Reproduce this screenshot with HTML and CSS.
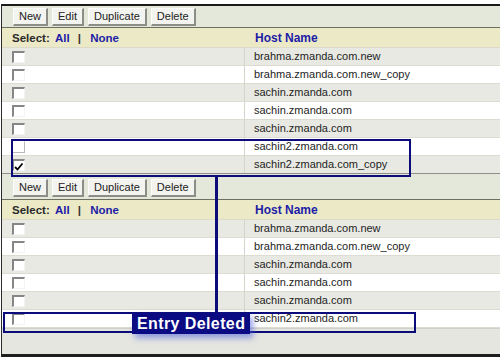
FILE: index.html
```html
<!DOCTYPE html>
<html>
<head>
<meta charset="utf-8">
<link rel="stylesheet" href="styles.css">
</head>
<body>
<div class="frame">
  <div class="toolbar toolbar-first">
    <span class="btn">New</span><span class="btn">Edit</span><span class="btn">Duplicate</span><span class="btn">Delete</span>
  </div>
  <div class="header">
    <div class="hcell"><b class="sel">Select:</b> <a class="lnk">All</a> <span class="bar">|</span> <a class="lnk">None</a></div>
    <div class="hcell host-h">Host Name</div>
  </div>
  <div class="row gray"><div class="c1"><span class="cb"></span></div><div class="c2">brahma.zmanda.com.new</div></div>
  <div class="row"><div class="c1"><span class="cb"></span></div><div class="c2">brahma.zmanda.com.new_copy</div></div>
  <div class="row gray"><div class="c1"><span class="cb"></span></div><div class="c2">sachin.zmanda.com</div></div>
  <div class="row"><div class="c1"><span class="cb"></span></div><div class="c2">sachin.zmanda.com</div></div>
  <div class="row gray"><div class="c1"><span class="cb"></span></div><div class="c2">sachin.zmanda.com</div></div>
  <div class="row"><div class="c1"><span class="cb faded"></span></div><div class="c2">sachin2.zmanda.com</div></div>
  <div class="row gray last"><div class="c1"><span class="cb checked"><svg width="10" height="9" viewBox="0 0 10 9"><path d="M1 5 L3.5 7.5 L8.5 1.5" fill="none" stroke="#000" stroke-width="1.8"/></svg></span></div><div class="c2">sachin2.zmanda.com_copy</div></div>

  <div class="toolbar">
    <span class="btn">New</span><span class="btn">Edit</span><span class="btn">Duplicate</span><span class="btn">Delete</span>
  </div>
  <div class="header">
    <div class="hcell"><b class="sel">Select:</b> <a class="lnk">All</a> <span class="bar">|</span> <a class="lnk">None</a></div>
    <div class="hcell host-h">Host Name</div>
  </div>
  <div class="row gray"><div class="c1"><span class="cb"></span></div><div class="c2">brahma.zmanda.com.new</div></div>
  <div class="row"><div class="c1"><span class="cb"></span></div><div class="c2">brahma.zmanda.com.new_copy</div></div>
  <div class="row gray"><div class="c1"><span class="cb"></span></div><div class="c2">sachin.zmanda.com</div></div>
  <div class="row"><div class="c1"><span class="cb"></span></div><div class="c2">sachin.zmanda.com</div></div>
  <div class="row gray"><div class="c1"><span class="cb"></span></div><div class="c2">sachin.zmanda.com</div></div>
  <div class="row"><div class="c1"><span class="cb"></span></div><div class="c2">sachin2.zmanda.com</div></div>
  <div class="footer"></div>
</div>

<div class="ann box1"></div>
<div class="ann vline"></div>
<div class="ann box2"></div>
<div class="ann label">Entry Deleted</div>
</body>
</html>
```
FILE: styles.css
```css
html, body {
  margin: 0;
  padding: 0;
  background: #ffffff;
}
body {
  position: relative;
  width: 500px;
  height: 364px;
  overflow: hidden;
  font-family: "Liberation Sans", Arial, sans-serif;
  font-size: 11px;
  color: #1e1e1e;
}
.frame {
  margin-top: 4px;
  margin-left: 1px;
  border-top: 2px solid #1a1a1a;
  border-left: 1px solid #2a2a2a;
  border-bottom: 3px solid #1e1e1e;
  box-shadow: inset 1px 0 0 #9a9a94;
}
.toolbar {
  height: 26px;
  box-sizing: border-box;
  padding: 5px 0 0 11px;
  background: #e3e8da;
  border-bottom: 1px solid #6c705f;
  display: flex;
  gap: 4px;
  align-items: flex-start;
}
.toolbar-first {
  height: 22px;
  padding-top: 2px;
}
.btn {
  display: inline-block;
  height: 18px;
  box-sizing: border-box;
  line-height: 15px;
  padding: 0 5px;
  background: #f3f3ef;
  color: #222;
  border-top: 1px solid #fdfdfb;
  border-left: 1px solid #fdfdfb;
  border-right: 2px solid #8d8d88;
  border-bottom: 2px solid #8d8d88;
  font-size: 11px;
}
.header {
  display: grid;
  grid-template-columns: 243px 1fr;
  height: 20px;
  background: #ece9c7;
  border-bottom: 1px solid #dcdacb;
  box-sizing: border-box;
  align-items: center;
  font-size: 11.5px;
  font-weight: bold;
}
.hcell {
  padding-left: 10px;
}
.sel {
  color: #2a2a2a;
}
.lnk {
  color: #1d1da6;
  margin-left: 2px;
}
.bar {
  color: #333;
  margin: 0 4px 0 5px;
}
.host-h {
  color: #1d1da6;
  padding-left: 10px;
  font-size: 12px;
}
.row {
  display: grid;
  grid-template-columns: 243px 1fr;
  height: 18px;
  box-sizing: border-box;
  background: #ffffff;
  border-bottom: 1px solid #dddcd3;
}
.row.gray {
  background: #e8e9e3;
}
.row.last {
  border-bottom: 1px solid #8e8f88;
}
.c1 {
  border-right: 1px solid #d4d4cc;
  padding-left: 10px;
  display: flex;
  align-items: center;
}
.c2 {
  padding-left: 9px;
  line-height: 17px;
  color: #1e1e1e;
}
.cb {
  display: inline-block;
  width: 13px;
  height: 12px;
  box-sizing: border-box;
  background: #ffffff;
  border-top: 2px solid #868686;
  border-left: 2px solid #868686;
  border-right: 1px solid #f4f4f4;
  border-bottom: 1px solid #f4f4f4;
  position: relative;
}
.cb.faded {
  border: 1px solid #b8b8b8;
  border-top-color: #ffffff;
}
.cb svg {
  position: absolute;
  left: 0;
  top: 1px;
}
.footer {
  height: 26px;
  background: #e5e6e0;
  border-top: 1px solid #cfd0c8;
  box-sizing: border-box;
}
.ann {
  position: absolute;
  box-sizing: border-box;
}
.box1 {
  left: 11px;
  top: 139px;
  width: 400px;
  height: 38px;
  border: 2px solid #0b0b7a;
}
.vline {
  left: 215px;
  top: 176px;
  width: 3px;
  height: 138px;
  background: #0b0b7a;
}
.box2 {
  left: 3px;
  top: 312px;
  width: 413px;
  height: 21px;
  border: 2px solid #0b0b7a;
}
.label {
  left: 132px;
  top: 313px;
  width: 118px;
  height: 21px;
  background: #0a0a82;
  color: #ffffff;
  font-weight: bold;
  font-size: 16px;
  letter-spacing: 0.4px;
  line-height: 21px;
  padding-left: 5px;
  box-shadow: 3px 4px 6px rgba(70, 90, 220, 0.55);
}
```
